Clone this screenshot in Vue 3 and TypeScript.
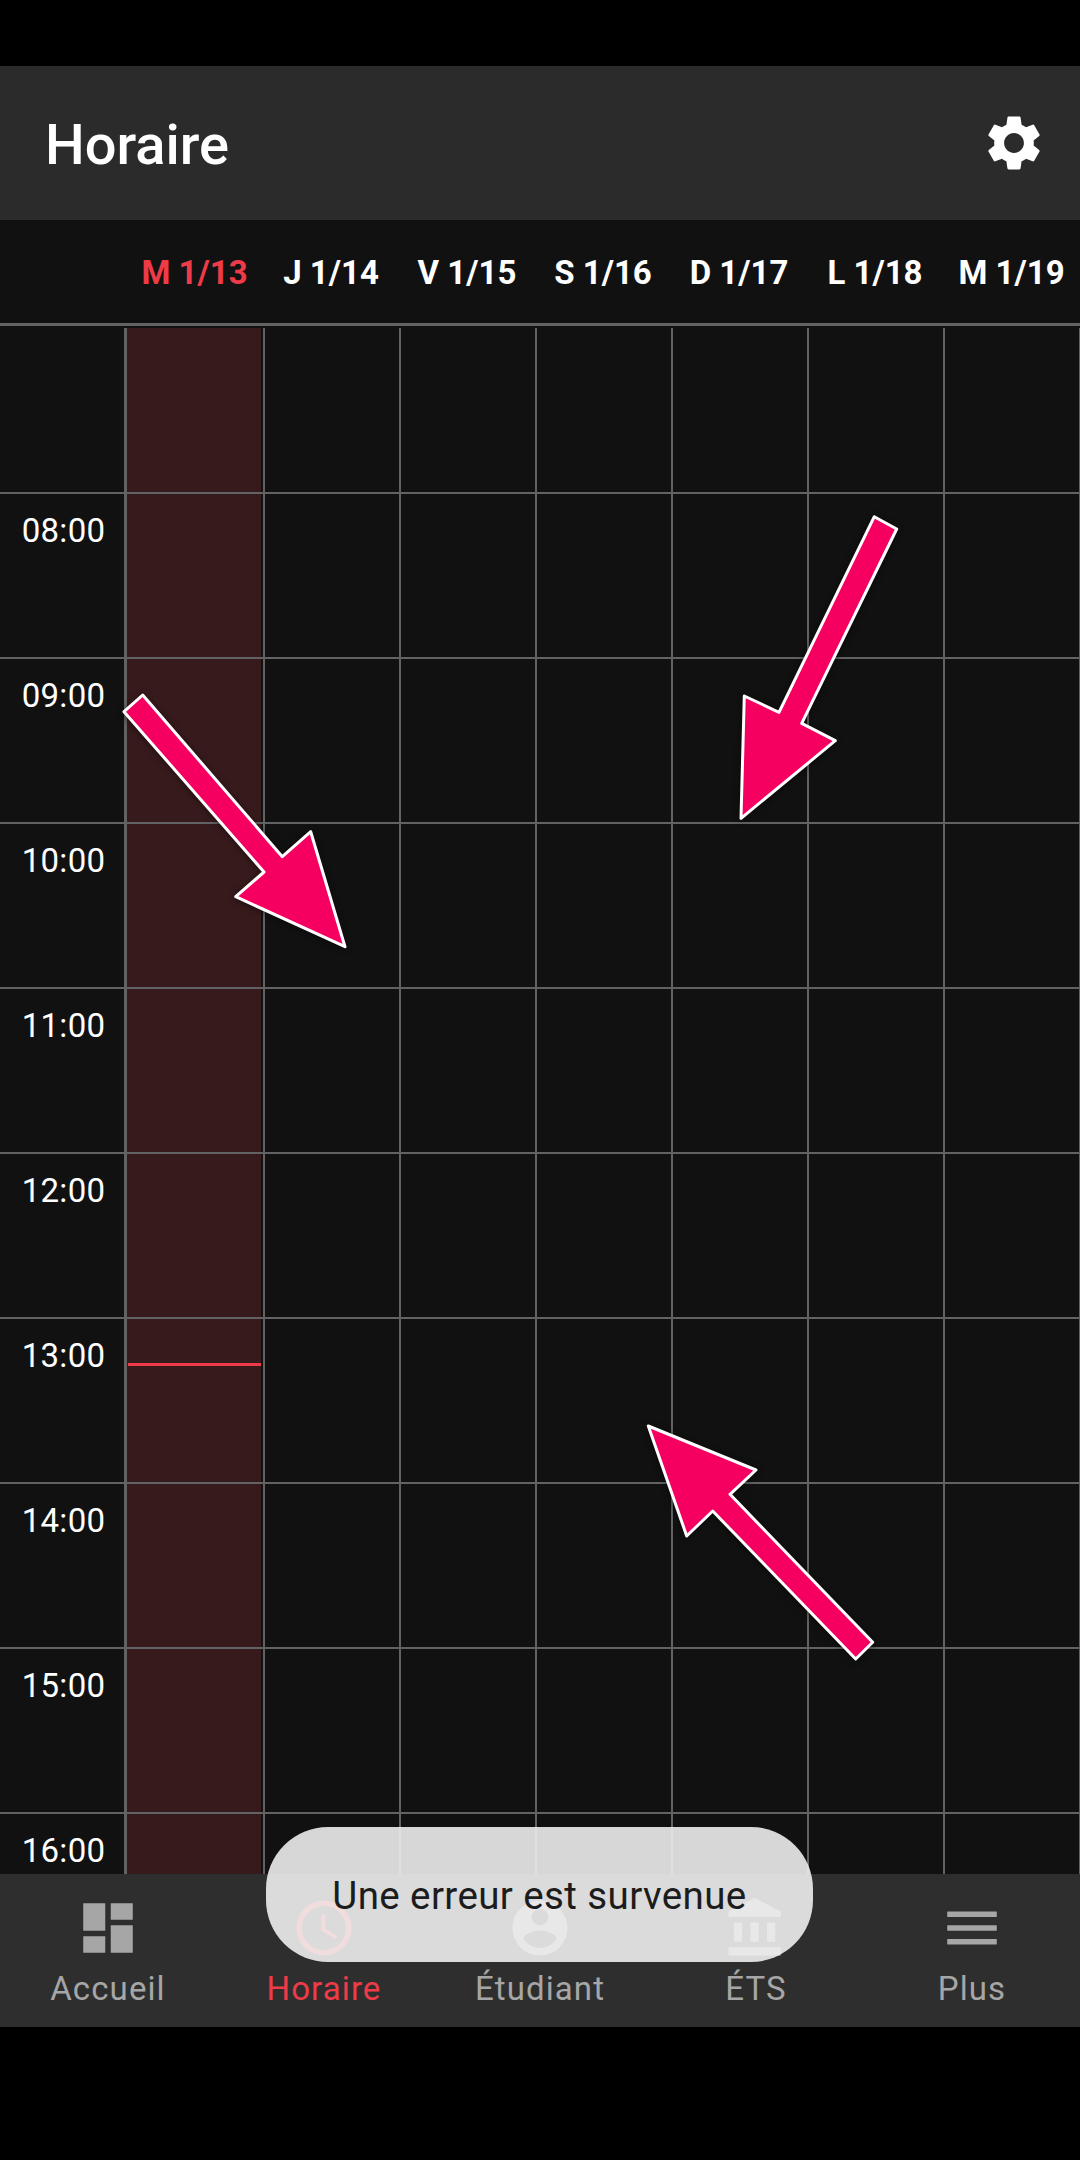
<script setup lang="ts">
interface NavItem {
  label: string
  path: string
  active?: boolean
}

const days: string[] = ['M 1/13', 'J 1/14', 'V 1/15', 'S 1/16', 'D 1/17', 'L 1/18', 'M 1/19']
const hours: string[] = ['', '08:00', '09:00', '10:00', '11:00', '12:00', '13:00', '14:00', '15:00', '16:00']

const navItems: NavItem[] = [
  { label: 'Accueil', path: 'M3 13h8V3H3v10zm0 8h8v-6H3v6zm10 0h8V11h-8v10zm0-18v6h8V3h-8z' },
  {
    label: 'Horaire',
    active: true,
    path: 'M11.99 2C6.47 2 2 6.48 2 12s4.47 10 9.99 10C17.52 22 22 17.52 22 12S17.52 2 11.99 2zM12 20c-4.42 0-8-3.58-8-8s3.58-8 8-8 8 3.58 8 8-3.58 8-8 8zm.5-13H11v6l5.25 3.15.75-1.23-4.5-2.67z'
  },
  {
    label: 'Étudiant',
    path: 'M12 2C6.48 2 2 6.48 2 12s4.48 10 10 10 10-4.48 10-10S17.52 2 12 2zm0 3c1.66 0 3 1.34 3 3s-1.34 3-3 3-3-1.34-3-3 1.34-3 3-3zm0 14.2c-2.5 0-4.71-1.28-6-3.22.03-1.99 4-3.08 6-3.08 1.99 0 5.97 1.09 6 3.08-1.29 1.94-3.5 3.22-6 3.22z'
  },
  { label: 'ÉTS', path: 'M4 10v7h3v-7H4zm6 0v7h3v-7h-3zM2 22h19v-3H2v3zm14-12v7h3v-7h-3zm-4.5-9L2 6v2h19V6l-9.5-5z' },
  { label: 'Plus', path: 'M3 18h18v-2H3v2zm0-5h18v-2H3v2zm0-7v2h18V6H3z' }
]

const arrows: string[] = [
  '124,711.7 142.7,695 282.3,856.7 310.7,831.7 345,946.7 235.7,896.7 264,872',
  '874.3,516.7 896.7,529 801.7,723.3 835.3,740.7 741,818.3 744.3,696 779,712.3',
  '648.3,1426 756,1470 730,1494.3 872.7,1642.3 855.7,1659 712.7,1511 686.7,1536'
]

const settingsPath =
  'M19.14 12.94c.04-.3.06-.61.06-.94 0-.32-.02-.64-.07-.94l2.03-1.58c.18-.14.23-.41.12-.61l-1.92-3.32c-.12-.22-.37-.29-.59-.22l-2.39.96c-.5-.38-1.03-.7-1.62-.94l-.36-2.54c-.04-.24-.24-.41-.48-.41h-3.84c-.24 0-.43.17-.47.41l-.36 2.54c-.59.24-1.13.57-1.62.94l-2.39-.96c-.22-.08-.47 0-.59.22L2.74 8.87c-.12.21-.08.47.12.61l2.03 1.58c-.05.3-.09.63-.09.94s.02.64.07.94l-2.03 1.58c-.18.14-.23.41-.12.61l1.92 3.32c.12.22.37.29.59.22l2.39-.96c.5.38 1.03.7 1.62.94l.36 2.54c.05.24.24.41.48.41h3.84c.24 0 .44-.17.47-.41l.36-2.54c.59-.24 1.13-.56 1.62-.94l2.39.96c.22.08.47 0 .59-.22l1.92-3.32c.12-.22.07-.47-.12-.61l-2.01-1.58zM12 15.6c-1.98 0-3.6-1.62-3.6-3.6s1.62-3.6 3.6-3.6 3.6 1.62 3.6 3.6-1.62 3.6-3.6 3.6z'
</script>

<template>
  <div class="screen">
    <header class="app-bar">
      <h1 class="title">Horaire</h1>
      <svg class="settings" viewBox="0 0 24 24"><path :d="settingsPath" /></svg>
    </header>

    <div class="day-header">
      <span></span>
      <span v-for="(day, i) in days" :key="i" class="day" :class="{ today: i === 0 }">{{ day }}</span>
    </div>

    <main class="schedule">
      <div v-for="(hour, h) in hours" :key="h" class="row">
        <div class="time">{{ hour }}</div>
        <div v-for="(day, i) in days" :key="i" class="cell" :class="{ today: i === 0 }">
          <div v-if="i === 0 && hour === '13:00'" class="now"></div>
        </div>
      </div>
    </main>

    <nav class="nav">
      <div v-for="item in navItems" :key="item.label" class="nav-item" :class="{ active: item.active }">
        <svg class="nav-icon" viewBox="0 0 24 24"><path :d="item.path" /></svg>
        <span class="nav-label">{{ item.label }}</span>
      </div>
    </nav>

    <!-- flèches d'annotation -->
    <svg class="arrows" viewBox="0 0 1080 2160">
      <polygon v-for="(points, i) in arrows" :key="i" :points="points" />
    </svg>

    <div class="toast">Une erreur est survenue</div>
  </div>
</template>

<style>
html,
body {
  margin: 0;
  background: #000;
}
</style>

<style scoped>
.screen {
  position: relative;
  display: flex;
  flex-direction: column;
  width: 1080px;
  height: 2160px;
  padding-top: 66px;
  box-sizing: border-box;
  overflow: hidden;
  background: #000;
  font-family: Roboto, "Liberation Sans", sans-serif;
}

.app-bar {
  display: flex;
  align-items: center;
  justify-content: space-between;
  height: 154px;
  padding: 0 33px 0 45px;
  background: #2b2b2b;
}

.title {
  margin: 3px 0 0;
  color: #fff;
  font-size: 56px;
  font-weight: 500;
}

.settings {
  width: 66px;
  height: 66px;
  fill: #fff;
}

.day-header {
  display: grid;
  grid-template-columns: 124px 139px repeat(5, 136px) 137px;
  align-items: center;
  height: 103px;
  border-bottom: 3px solid #626265;
  background: #111;
}

.day {
  padding-top: 1px;
  color: #fff;
  font-size: 33px;
  font-weight: 700;
  text-align: center;
  white-space: nowrap;
}

.day.today {
  padding-left: 2px;
  color: #ef3b47;
}

.schedule {
  height: 1548px;
  padding-top: 2px;
  box-sizing: border-box;
  overflow: hidden;
  background: #111;
}

.row {
  display: grid;
  grid-template-columns: 124px 139px repeat(5, 136px) 137px;
  height: 165px;
  border-bottom: 2px solid #626265;
  box-sizing: border-box;
}

.row:first-child {
  height: 166px;
}

.time {
  padding: 17px 0 0 3px;
  color: #fff;
  font-size: 33px;
  letter-spacing: 0.3px;
  text-align: center;
}

.cell {
  position: relative;
  border-left: 2px solid #626265;
}

.cell:last-child {
  border-right: 1px solid #626265;
}

.cell.today {
  padding-right: 2px;
  border-left-width: 3px;
  background: #371a1c;
  background-clip: content-box;
}

.now {
  position: absolute;
  top: 44px;
  left: 1px;
  right: 2px;
  height: 3px;
  background: #ef3b47;
}

.nav {
  display: grid;
  grid-template-columns: repeat(5, 216px);
  height: 153px;
  background: #2e2e2e;
}

.nav-item {
  display: flex;
  flex-direction: column;
  align-items: center;
  padding-top: 21px;
  color: #a6a6a6;
  fill: #a6a6a6;
}

.nav-item.active {
  color: #ef3b47;
  fill: #ef3b47;
}

.nav-icon {
  width: 66px;
  height: 66px;
}

.nav-label {
  margin-top: 8px;
  font-size: 33px;
  letter-spacing: 1.1px;
}

.arrows {
  position: absolute;
  top: 0;
  left: 0;
  width: 1080px;
  height: 2160px;
  filter: drop-shadow(0 1px 3px rgba(0, 0, 0, 0.5));
}

.arrows polygon {
  fill: #f50061;
  stroke: #fff;
  stroke-width: 3px;
  stroke-linejoin: round;
}

.toast {
  position: absolute;
  top: 1827px;
  left: 266px;
  display: flex;
  align-items: center;
  justify-content: center;
  width: 547px;
  height: 135px;
  padding-top: 1px;
  box-sizing: border-box;
  border-radius: 62px;
  background: rgba(240, 240, 240, 0.89);
  color: #1c1c1c;
  font-size: 38.5px;
  letter-spacing: 0.4px;
}
</style>
